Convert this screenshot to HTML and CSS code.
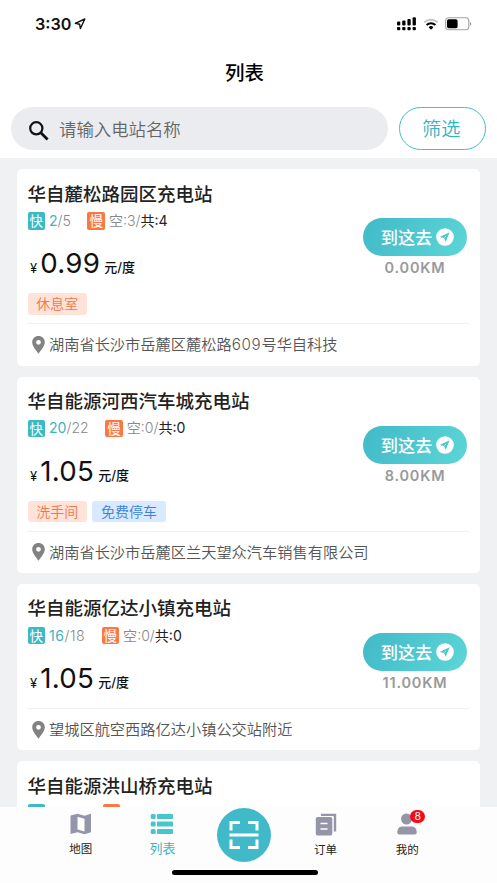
FILE: index.html
```html
<!DOCTYPE html>
<html lang="zh-CN">
<head>
<meta charset="utf-8">
<title>列表</title>
<link rel="stylesheet" href="styles.css">
</head>
<body>
<svg class="defs" width="0" height="0">
  <symbol id="pin" viewBox="0 0 13 18"><path fill-rule="evenodd" d="M6.5 0C2.9 0 .2 2.7.2 6.3c0 4 4 8.200 6.300 11.500 2.300-3.300 6.300-7.500 6.300-11.500C12.800 2.700 10.100 0 6.500 0zm0 3.900a2.400 2.400 0 1 1 0 4.800 2.400 2.400 0 0 1 0-4.800z" fill="#828282"/></symbol>
  <symbol id="go" viewBox="0 0 18 18"><circle cx="9" cy="9" r="8.800" fill="#fff"/><path d="M13.600 4.300 3.700 9l4.300 1.100 1.700 3.700z" fill="#4cc4cc"/><path d="M8 10.100l2.200-2.200" stroke="#fff" stroke-width=".6"/></symbol>
</svg>
<div class="phone">
  <header class="header">
    <div class="status">
      <div class="clock">3:30
        <svg width="12" height="12" viewBox="0 0 12 12"><path d="M10.800 1 1.300 5.300l4.300.9.800 4.300z" fill="none" stroke="#111" stroke-width="1.400" stroke-linejoin="round"/></svg>
      </div>
      <div class="signals">
        <svg width="20" height="14" viewBox="0 0 20 14"><g fill="#000"><rect x="0" y="4.500" width="3.300" height="4" rx="1"/><rect x="5.200" y="3.500" width="3.300" height="5" rx="1"/><rect x="10.400" y="2" width="3.300" height="6.500" rx="1"/><rect x="15.600" y=".3" width="3.300" height="8.200" rx="1"/><rect x="0" y="10" width="3.300" height="3.200" rx="1"/><rect x="5.200" y="10" width="3.300" height="3.200" rx="1"/><rect x="10.400" y="10" width="3.300" height="3.200" rx="1"/><rect x="15.600" y="10" width="3.300" height="3.200" rx="1"/></g></svg>
        <svg width="16" height="12" viewBox="0 0 16 12"><g fill="none" stroke-width="2"><path d="M1.200 4.400a9.800 9.800 0 0 1 13.600 0" stroke="#c4c4c4"/><path d="M3.600 7a6.300 6.300 0 0 1 8.800 0" stroke="#000"/></g><path d="M5.600 9.200a3.500 3.500 0 0 1 4.800 0L8 11.700z" fill="#000"/></svg>
        <svg width="27" height="14" viewBox="0 0 27 14"><rect x=".6" y=".8" width="23.200" height="12" rx="3.200" fill="none" stroke="#a2a2a2" stroke-width="1.100"/><rect x="2" y="2.300" width="10.600" height="9" rx="1.700"/><path d="M25 5v3.800c1.600-.4 1.600-3.400 0-3.800z" fill="#999"/></svg>
      </div>
    </div>
    <h1 class="title">列表</h1>
    <div class="search-row">
      <div class="search">
        <svg width="22" height="22" viewBox="0 0 22 22"><circle cx="8.300" cy="8.300" r="6.100" fill="none" stroke="#111" stroke-width="2.200"/><path d="M12.600 12.600l7 7" stroke="#111" stroke-width="2.800"/></svg>
        <span>请输入电站名称</span>
      </div>
      <div class="filter">筛选</div>
    </div>
  </header>

  <main class="list">
    <article class="card">
      <div class="body">
        <div class="info">
          <h2>华自麓松路园区充电站</h2>
          <div class="stats"><i class="kind fast">快</i><span class="count"><b>2</b>/5</span><i class="kind slow">慢</i><span class="count">空:3/<em>共:4</em></span></div>
          <div class="price"><span class="yen">¥</span><span class="amount">0.99</span><span class="unit">元/度</span></div>
          <div class="tags"><span class="tag">休息室</span></div>
        </div>
        <div class="nav"><div class="go"><span>到这去</span><svg width="18" height="18"><use href="#go"/></svg></div><div class="km">0.00KM</div></div>
      </div>
      <div class="address"><svg width="13" height="18"><use href="#pin"/></svg><span>湖南省长沙市岳麓区麓松路<span class="num">609</span>号华自科技</span></div>
    </article>

    <article class="card">
      <div class="body">
        <div class="info">
          <h2>华自能源河西汽车城充电站</h2>
          <div class="stats"><i class="kind fast">快</i><span class="count"><b>20</b>/22</span><i class="kind slow">慢</i><span class="count">空:0/<em>共:0</em></span></div>
          <div class="price"><span class="yen">¥</span><span class="amount">1.05</span><span class="unit">元/度</span></div>
          <div class="tags"><span class="tag">洗手间</span><span class="tag blue">免费停车</span></div>
        </div>
        <div class="nav"><div class="go"><span>到这去</span><svg width="18" height="18"><use href="#go"/></svg></div><div class="km">8.00KM</div></div>
      </div>
      <div class="address"><svg width="13" height="18"><use href="#pin"/></svg><span>湖南省长沙市岳麓区兰天望众汽车销售有限公司</span></div>
    </article>

    <article class="card">
      <div class="body">
        <div class="info">
          <h2>华自能源亿达小镇充电站</h2>
          <div class="stats"><i class="kind fast">快</i><span class="count wide"><b>16</b>/18</span><i class="kind slow">慢</i><span class="count">空:0/<em>共:0</em></span></div>
          <div class="price"><span class="yen">¥</span><span class="amount">1.05</span><span class="unit">元/度</span></div>
        </div>
        <div class="nav"><div class="go"><span>到这去</span><svg width="18" height="18"><use href="#go"/></svg></div><div class="km">11.00KM</div></div>
      </div>
      <div class="address"><svg width="13" height="18"><use href="#pin"/></svg><span>望城区航空西路亿达小镇公交站附近</span></div>
    </article>

    <article class="card">
      <div class="info">
        <h2>华自能源洪山桥充电站</h2>
        <div class="stats"><i class="kind fast"></i><i class="kind slow later"></i></div>
      </div>
    </article>
  </main>

  <footer class="tabbar">
    <nav class="tabs">
      <div class="tab"><svg width="22" height="22" viewBox="0 0 22 22"><path fill-rule="evenodd" d="M.5 2.500 7.500.8l7 2 6.500-2v18.400l-6.500 2-7-2-7 1.700zM7.500 3.800v12.600l7 2V5.800z" fill="#9495aa"/></svg><span>地图</span></div>
      <div class="tab active"><svg width="24" height="22" viewBox="0 0 24 22"><g fill="#48c6ce"><rect x=".7" y="1" width="5" height="5" rx="1.500"/><rect x="7" y="1" width="16" height="5" rx=".8"/><rect x=".7" y="8.500" width="5" height="5" rx="1.500"/><rect x="7" y="8.500" width="16" height="5" rx=".8"/><rect x=".7" y="16" width="5" height="5" rx="1.500"/><rect x="7" y="16" width="16" height="5" rx=".8"/></g></svg><span>列表</span></div>
      <div class="tab"><div class="scan"><svg width="32" height="30" viewBox="0 0 32 30" fill="none" stroke="#fff" stroke-width="3"><path d="M3 10.500V2.500h9M20 2.500h9v8M3 19.500v8h9M20 27.500h9v-8M1.500 15h29"/></svg></div></div>
      <div class="tab"><svg width="22" height="23" viewBox="0 0 22 23"><path d="M6 .8h15.200v17.700h-2.400V3H6z" fill="#9495a6"/><rect x=".8" y="4" width="16.500" height="18.500" rx="1.800" fill="#9495a6"/><path d="M5.500 10.500h7M5.500 16h7" stroke="#fff" stroke-width="1.700"/></svg><span>订单</span></div>
      <div class="tab"><div class="me"><svg width="22" height="23" viewBox="0 0 22 23" fill="#9495a6"><circle cx="10.500" cy="6" r="5.500"/><path d="M1.300 19.500c0-4 2-6 5.500-6h8.400c3.500 0 5.500 2 5.500 6 0 1.300-.7 2-2 2H3.300c-1.300 0-2-.7-2-2z"/></svg><span class="badge">8</span></div><span>我的</span></div>
    </nav>
    <div class="home"></div>
  </footer>
</div>
</body>
</html>
```

FILE: styles.css
```css
* { box-sizing: border-box; }
body { margin: 0; font-family: Inter, "Noto Sans CJK SC", sans-serif; color: #222; }
h1, h2 { margin: 0; font-weight: 500; }
i, em { font-style: normal; }
b { font-weight: 400; }
svg { display: block; flex: none; }
.defs { position: absolute; }

.phone { width: 497px; height: 883px; overflow: hidden; display: flex; flex-direction: column; background: #f0f1f3; }
.header { flex: none; height: 158.300px; background: #fff; }
.status { height: 47px; padding: 0 25px 0 35px; display: flex; align-items: center; justify-content: space-between; }
.clock { display: flex; align-items: center; gap: 3px; font-size: 16.200px; font-weight: 600; color: #111; }
.signals { display: flex; align-items: center; gap: 5.500px; }
.signals svg:nth-child(3) { margin-left: 1px; }
.title { height: 50px; line-height: 52px; padding-right: 8px; text-align: center; font-size: 19.500px; color: #000; }
.search-row { display: flex; gap: 11px; padding: 9.500px 11px 0; }
.search { width: 377px; height: 43.500px; border-radius: 22px; background: #ebecf0; display: flex; align-items: center; gap: 9px; padding: 0 17px; font-size: 17.400px; font-weight: 350; color: #666; }
.search svg { margin-top: 5px; }
.filter { width: 87.500px; height: 43.500px; border: 1px solid #43bdc9; border-radius: 22px; line-height: 43px; padding-right: 2px; text-align: center; font-size: 19.200px; font-weight: 350; color: #35b5c2; }

.list { flex: 1; min-height: 0; overflow: hidden; padding: 11px 17px 0 16.500px; display: flex; flex-direction: column; gap: 11px; }
.card { flex: none; padding: 11.500px 11px 0; background: #fff; border-radius: 5px; }
.card:last-child { height: 120px; }
.body { display: flex; justify-content: space-between; border-bottom: 1px solid #f1f1f3; }
h2 { height: 26px; line-height: 26px; font-size: 18.500px; color: #222; }
.stats { display: flex; align-items: center; height: 17.500px; margin-top: 5.500px; }
.kind { width: 17.500px; height: 17.500px; border-radius: 2px; line-height: 18px; text-align: center; font-size: 13.500px; color: #fff; }
.fast { background: #3bb9c4; }
.slow { background: #fb7845; margin-left: 16.500px; }
.later { margin-left: 57.500px; }
.count { margin-left: 4px; line-height: 17px; margin-top: -1px; font-size: 14.100px; font-weight: 350; color: #888; white-space: nowrap; }
.wide { letter-spacing: .5px; }
.count b { color: #3bb5bf; }
.count em { font-weight: 400; color: #222; }
.price { height: 63.700px; padding: 16.500px 0 0 2.500px; display: flex; align-items: baseline; line-height: 34px; color: #111; }
.yen { font-size: 13px; }
.amount { margin-left: 3px; font-size: 27.700px; letter-spacing: .3px; }
.unit { margin-left: 4px; font-size: 13px; font-weight: 500; position: relative; top: -1px; }
.tags { display: flex; gap: 5.500px; padding-bottom: 8.300px; }
.tag { height: 21.500px; padding: 0 8.700px; border-radius: 3px; line-height: 21px; font-size: 14px; font-weight: 350; color: #f47748; background: #ffe3d9; }
.blue { color: #3d80d4; background: #d9e9ff; }
.nav { width: 104px; margin: 37.700px 2px 0 0; }
.go { height: 38px; border-radius: 19px; padding-left: 5px; display: flex; align-items: center; justify-content: center; gap: 4px; font-size: 17.200px; font-weight: 500; color: #fff; background: linear-gradient(120deg, #41b9c8, #5dd6d8); }
.go span { margin-top: -1px; }
.km { text-align: center; line-height: 24.500px; font-size: 14.500px; font-weight: 600; letter-spacing: .8px; color: #999; }
.address { height: 41.300px; padding-left: 4.500px; display: flex; align-items: center; font-size: 15.230px; font-weight: 350; color: #555; white-space: nowrap; }
.address > svg { margin-right: 4px; }
.address > span { margin-top: -3px; }
.num { letter-spacing: .7px; }

.tabbar { flex: none; height: 76.500px; background: #fdfdfd; }
.tabs { height: 63.500px; padding: 0 49px 0 40px; display: grid; grid-template-columns: repeat(5, 1fr); }
.tab { display: flex; flex-direction: column; align-items: center; padding-top: 6px; font-size: 11.500px; color: #222; }
.tab > span { margin-top: 4px; line-height: 20px; }
.tab.active { font-size: 13px; color: #3bb5c0; }
.tab.active > span { margin-top: 3px; }
.scan { width: 54px; height: 54px; margin-top: -5px; border-radius: 50%; background: #40bac9; display: flex; align-items: center; justify-content: center; }
.me { position: relative; }
.badge { position: absolute; left: 14px; top: -3px; width: 15px; height: 13px; border-radius: 7px; background: #f30c14; color: #fff; font-size: 10.500px; line-height: 13px; text-align: center; }
.home { width: 146px; height: 5px; margin-left: 171.500px; border-radius: 3px; background: #000; }
```
